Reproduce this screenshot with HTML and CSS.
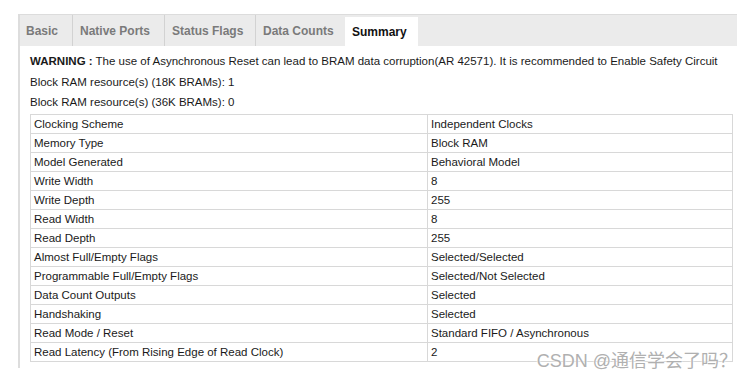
FILE: index.html
```html
<!DOCTYPE html>
<html>
<head>
  <meta charset="UTF-8" />
  <title>Summary</title>
  <link rel="stylesheet" href="styles.css">
</head>
<body>
  <div class="panel">
    <div class="tabs">
      <div class="tab tab-basic">Basic</div>
      <div class="tab tab-ports">Native Ports</div>
      <div class="tab tab-flags">Status Flags</div>
      <div class="tab tab-counts">Data Counts</div>
      <div class="tab tab-summary active">Summary</div>
    </div>
    <div class="content">
      <p class="line"><b>WARNING :</b> The use of Asynchronous Reset can lead to BRAM data corruption(AR 42571). It is recommended to Enable Safety Circuit</p>
      <p class="line">Block RAM resource(s) (18K BRAMs): 1</p>
      <p class="line">Block RAM resource(s) (36K BRAMs): 0</p>
      <table class="summary">
        <tr><td class="key">Clocking Scheme</td><td>Independent Clocks</td></tr>
        <tr><td class="key">Memory Type</td><td>Block RAM</td></tr>
        <tr><td class="key">Model Generated</td><td>Behavioral Model</td></tr>
        <tr><td class="key">Write Width</td><td>8</td></tr>
        <tr><td class="key">Write Depth</td><td>255</td></tr>
        <tr><td class="key">Read Width</td><td>8</td></tr>
        <tr><td class="key">Read Depth</td><td>255</td></tr>
        <tr><td class="key">Almost Full/Empty Flags</td><td>Selected/Selected</td></tr>
        <tr><td class="key">Programmable Full/Empty Flags</td><td>Selected/Not Selected</td></tr>
        <tr><td class="key">Data Count Outputs</td><td>Selected</td></tr>
        <tr><td class="key">Handshaking</td><td>Selected</td></tr>
        <tr><td class="key">Read Mode / Reset</td><td>Standard FIFO / Asynchronous</td></tr>
        <tr><td class="key">Read Latency (From Rising Edge of Read Clock)</td><td>2</td></tr>
      </table>
    </div>
  </div>
  <div class="watermark">CSDN @通信学会了吗？</div>
</body>
</html>
```

FILE: styles.css
```css
body {
  font-family: "Liberation Sans", Arial, sans-serif;
  font-size: 11.5px;
  color: #1a1a1a;
  background-color: #fff;
  margin: 0;
  padding: 0;
}
.panel {
  margin: 14px 9px 0 18px;
  height: 353px;
  border-top: 1px solid #dcdcdc;
  border-left: 2px solid #dddddd;
}
.tabs {
  display: flex;
  height: 31px;
  background-color: #ebebeb;
}
.tab {
  flex: none;
  box-sizing: border-box;
  display: flex;
  align-items: center;
  padding-left: 6px;
  font-size: 12px;
  font-weight: bold;
  color: #7a7a7a;
  white-space: nowrap;
}
.tab + .tab {
  padding-left: 7px;
  border-left: 1px solid #d2d2d2;
}
.tab-basic { width: 52px; }
.tab-ports { width: 92px; }
.tab-flags { width: 91px; }
.tab-counts { width: 90px; }
.tab-summary { width: 73px; }
.tab.active {
  background-color: #fff;
  color: #111;
  margin-top: 2px;
  border-left: none;
}
.content {
  padding: 5px 0 0 10px;
}
.line {
  margin: 0;
  height: 20.5px;
  line-height: 20px;
  white-space: nowrap;
}
.summary {
  margin-top: 1px;
  width: 703px;
  border-collapse: collapse;
  border: 1px solid #d8d8d8;
}
.summary td {
  height: 18px;
  padding: 0 3px;
  border: 1px solid #d8d8d8;
  white-space: nowrap;
}
.summary .key {
  width: 390px;
}
.watermark {
  position: absolute;
  right: 9px;
  top: 346px;
  font-family: "Liberation Sans", "Noto Sans CJK SC", sans-serif;
  font-size: 18px;
  color: #b0b0b0;
  text-shadow: 0 0 2px #fff, 0 0 2px #fff;
}
```
